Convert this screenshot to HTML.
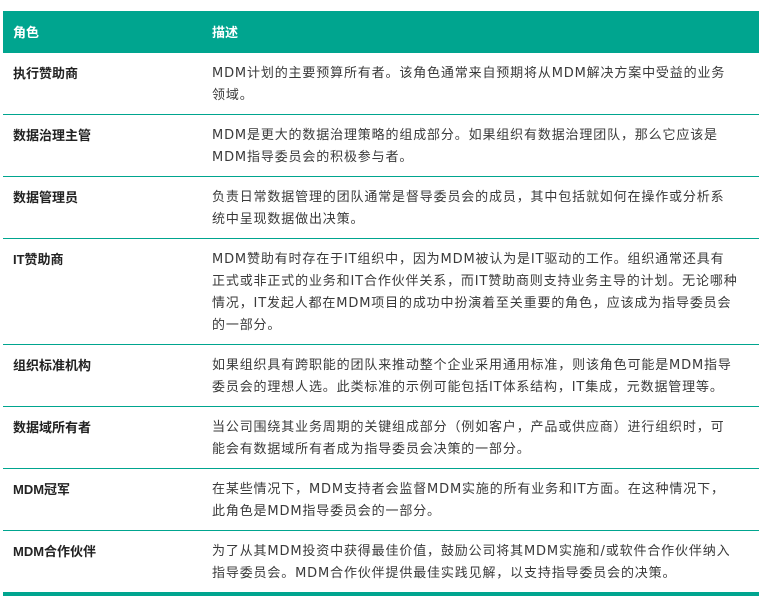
<!DOCTYPE html>
<html><head><meta charset="utf-8"><style>
body{margin:0;background:#fff;font-family:"Liberation Sans","Noto Sans CJK SC",sans-serif;}
table{position:absolute;left:3px;top:11px;width:756px;border-collapse:collapse;font-size:13px;color:#333;}
th{background:#00a58f;color:#fff;text-align:left;height:41px;padding:0 10px;font-weight:bold;font-size:13px;}
td{padding:10px 10px 7px;line-height:22px;vertical-align:top;border-top:1px solid #00a58f;white-space:nowrap;}
td:first-child{font-weight:bold;width:179px;color:#222;}
td:last-child{padding-left:10px;font-family:"DejaVu Sans","Noto Sans CJK SC",sans-serif;letter-spacing:0.85px;color:#3a3a3a;}
tr:last-child td{border-bottom:4px solid #00a58f;}
</style></head><body>
<table>
<tr><th>角色</th><th>描述</th></tr>
<tr><td>执行赞助商</td><td>MDM计划的主要预算所有者。该角色通常来自预期将从MDM解决方案中受益的业务<br>领域。</td></tr>
<tr><td>数据治理主管</td><td>MDM是更大的数据治理策略的组成部分。如果组织有数据治理团队，那么它应该是<br>MDM指导委员会的积极参与者。</td></tr>
<tr><td>数据管理员</td><td>负责日常数据管理的团队通常是督导委员会的成员，其中包括就如何在操作或分析系<br>统中呈现数据做出决策。</td></tr>
<tr><td>IT赞助商</td><td>MDM赞助有时存在于IT组织中，因为MDM被认为是IT驱动的工作。组织通常还具有<br>正式或非正式的业务和IT合作伙伴关系，而IT赞助商则支持业务主导的计划。无论哪种<br>情况，IT发起人都在MDM项目的成功中扮演着至关重要的角色，应该成为指导委员会<br>的一部分。</td></tr>
<tr><td>组织标准机构</td><td>如果组织具有跨职能的团队来推动整个企业采用通用标准，则该角色可能是MDM指导<br>委员会的理想人选。此类标准的示例可能包括IT体系结构，IT集成，元数据管理等。</td></tr>
<tr><td>数据域所有者</td><td>当公司围绕其业务周期的关键组成部分（例如客户，产品或供应商）进行组织时，可<br>能会有数据域所有者成为指导委员会决策的一部分。</td></tr>
<tr><td>MDM冠军</td><td>在某些情况下，MDM支持者会监督MDM实施的所有业务和IT方面。在这种情况下，<br>此角色是MDM指导委员会的一部分。</td></tr>
<tr><td>MDM合作伙伴</td><td>为了从其MDM投资中获得最佳价值，鼓励公司将其MDM实施和/或软件合作伙伴纳入<br>指导委员会。MDM合作伙伴提供最佳实践见解，以支持指导委员会的决策。</td></tr>
</table>
</body></html>
